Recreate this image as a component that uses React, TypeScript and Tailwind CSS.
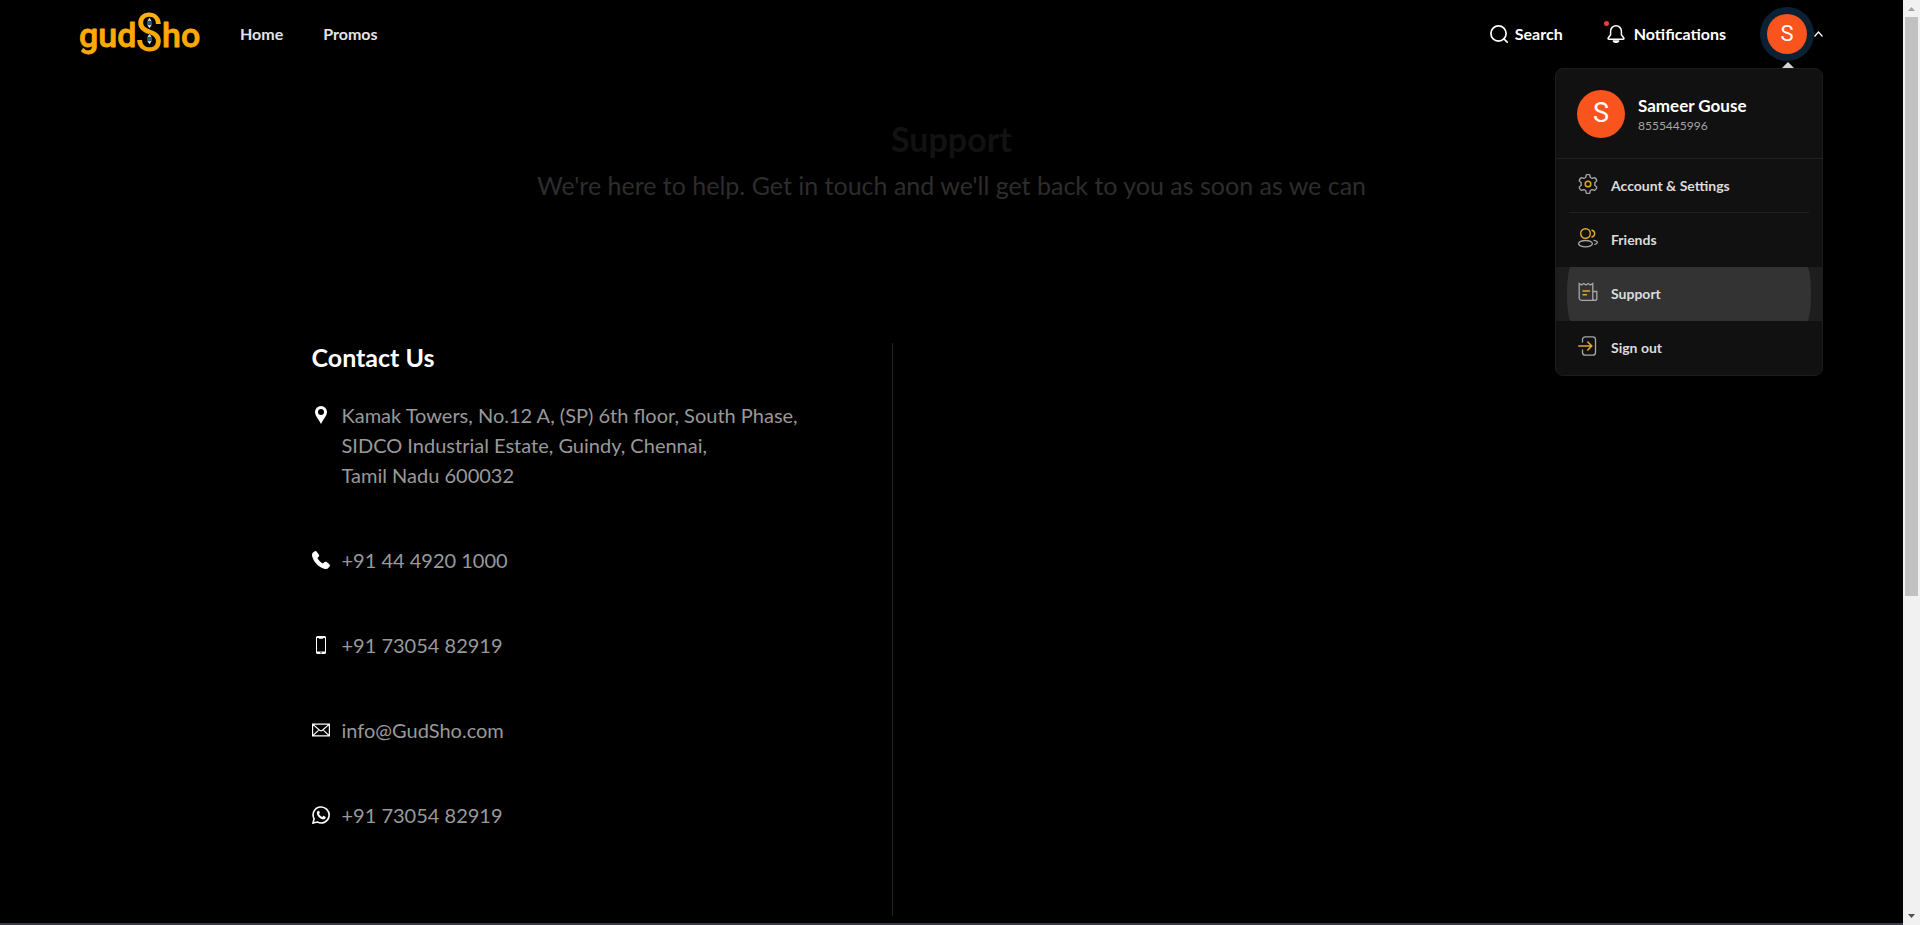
import type { ReactNode } from "react";

const contacts: { icon: ReactNode; lines: string[]; href?: string }[] = [
  {
    icon: (
      <svg viewBox="0 0 18 18" className="size-[18px]" fill="#fff" aria-hidden="true">
        <path fillRule="evenodd" d="M9 0a6 6 0 0 0-6 6c0 3.600 3.200 6.600 6 12 2.800-5.400 6-8.400 6-12a6 6 0 0 0-6-6Zm0 3a3 3 0 1 1 0 6 3 3 0 0 1 0-6Z" />
      </svg>
    ),
    lines: ["Kamak Towers, No.12 A, (SP) 6th floor, South Phase,", "SIDCO Industrial Estate, Guindy, Chennai,", "Tamil Nadu 600032"],
  },
  {
    icon: (
      <svg viewBox="0 0 18 18" className="size-[18px]" fill="#fff" aria-hidden="true">
        <path d="M2.500.500C3.300-.1 4.200 0 4.900.9l1.900 2.500c.6.800.5 1.600-.2 2.300L5.400 7c1 2.200 3 4.300 5.500 5.500l1.300-1.200c.7-.7 1.600-.8 2.400-.2l2.500 1.900c.9.700 1.100 1.500.5 2.400l-1.100 1.400c-1 1.200-2.500 1.500-4.300.9C6.700 16 1.900 11.200.3 5.700-.3 4 0 2.500 1 1.600Z" />
      </svg>
    ),
    lines: ["+91 44 4920 1000"],
    href: "tel:+914449201000",
  },
  {
    icon: (
      <svg viewBox="0 0 18 18" className="size-[18px]" aria-hidden="true">
        <path fill="#fff" fillRule="evenodd" d="M5.500 0h7A1.500 1.500 0 0 1 14 1.500v15a1.500 1.500 0 0 1-1.500 1.500h-7A1.500 1.500 0 0 1 4 16.500v-15A1.500 1.500 0 0 1 5.500 0ZM5 2v13.500h8V2h-1.500c-.2.600-.6.800-1 .8h-3c-.4 0-.8-.2-1-.8Zm4 14a.7.700 0 1 0 0 1.400A.7.700 0 0 0 9 16Z" />
      </svg>
    ),
    lines: ["+91 73054 82919"],
    href: "tel:+917305482919",
  },
  {
    icon: (
      <svg viewBox="0 0 18 18" className="size-[18px]" fill="none" stroke="#fff" strokeWidth="1.200" aria-hidden="true">
        <path d="M.6 3.100h16.800v11.800H.6ZM.9 3.400 7.600 9.200q1.400 1.100 2.800 0l6.700-5.800M.9 14.600l5.600-5.200M17.100 14.600l-5.600-5.200" />
      </svg>
    ),
    lines: ["info@GudSho.com"],
    href: "mailto:info@GudSho.com",
  },
  {
    icon: (
      <svg viewBox="0 0 18 18" className="size-[18px]" aria-hidden="true">
        <path fill="none" stroke="#fff" strokeWidth="1.600" d="m1 17 1.100-4.200A8 8 0 1 1 5.300 16Z" />
        <path fill="#fff" d="M6.500 4.700c.3 0 .5.100.6.400l.7 1.500c.1.300 0 .5-.2.700l-.6.700c.8 1.500 1.900 2.400 3.400 3l.7-.9c.2-.2.400-.3.700-.2l1.600.8c.3.200.4.400.3.700-.2 1.300-1.200 1.900-2.300 1.900-3.200-.2-6.400-3.400-6.600-6.400 0-1 .7-2.200 1.700-2.200Z" />
      </svg>
    ),
    lines: ["+91 73054 82919"],
    href: "https://wa.me/917305482919",
  },
];

function Logo() {
  return (
    <a href="#" aria-label="gudSho" className="block">
      <svg viewBox="0 0 120 60" className="h-[60px] w-[120px] overflow-visible" fontFamily="Roboto, sans-serif" fill="#fea904">
        <defs>
          <linearGradient id="gold" x1="0" y1="0" x2="0" y2="1">
            <stop offset="0" stopColor="#ffb80a" />
            <stop offset="1" stopColor="#fb9d04" />
          </linearGradient>
        </defs>
        <g stroke="#fea904" strokeWidth="0.800" strokeLinejoin="round">
          <text x="-1" y="43" fontSize="34" fontWeight="500">gud</text>
          <text x="82" y="43" fontSize="34" fontWeight="500">ho</text>
        </g>
        <text x="69" y="47" fontSize="54" fontWeight="400" textAnchor="middle" fontFamily="'Liberation Sans Narrow', 'Roboto Condensed', Roboto, sans-serif" fill="url(#gold)">S</text>
        <g stroke="#000" strokeWidth="0.500">
          <path d="M69.500 13.500q-5 5.500 0 11 5-5.500 0-11Z" fill="#f4f0df" />
          <circle cx="69.500" cy="19" r="2" fill="#1a6f96" />
          <path d="M69.500 29.500q-5 5.500 0 11 5-5.500 0-11Z" fill="#f4f0df" />
          <circle cx="69.500" cy="35" r="2" fill="#1a6f96" />
        </g>
      </svg>
    </a>
  );
}

const menuItems: { label: string; icon: ReactNode }[] = [
  {
    label: "Account & Settings",
    icon: (
      <>
        <path d="M8.200 1Q10-.2 11.800 1l.5 2.500q1 .3 1.700.9l2.600-.8q2 1.100 2.200 3.300l-2 1.900v2.400l2 1.900q-.2 2.200-2.200 3.300l-2.600-.8q-.7.600-1.700.9l-.5 2.500q-1.800 1.200-3.600 0l-.5-2.500q-1-.3-1.700-.9l-2.600.8q-2-1.100-2.200-3.300l2-1.900V8.800l-2-1.900q.2-2.200 2.200-3.300l2.600.8q.7-.6 1.700-.9Z" strokeLinejoin="round" />
        <circle cx="10" cy="10" r="2.800" stroke="#e0ab26" strokeWidth="1.500" />
      </>
    ),
  },
  {
    label: "Friends",
    icon: (
      <>
        <circle cx="7.500" cy="5.500" r="4.800" stroke="#e0ab26" strokeWidth="1.400" />
        <path d="M14 2.200a3.500 3.500 0 0 1 0 6.800" stroke="#e0ab26" strokeWidth="1.400" strokeLinecap="round" />
        <ellipse cx="7.500" cy="15.700" rx="6.900" ry="3.200" />
        <path d="M16 12.300q3.400.6 3.300 2.200-.1 1.300-2.500 1.800" strokeLinecap="round" />
      </>
    ),
  },
  {
    label: "Support",
    icon: (
      <>
        <path d="M1.200 1.500 3.500 3l2.300-1.500L8 3l2.200-1.500L12.500 3l2.300-1.500V18.400H3.800a2.600 2.600 0 0 1-2.600-2.600ZM14.800 9.500h4v6.900a2 2 0 0 1-4 0Z" />
        <path d="M5 9h6.500M5 12.800h3.500" stroke="#e0ab26" strokeWidth="1.500" strokeLinecap="round" />
      </>
    ),
  },
  {
    label: "Sign out",
    icon: (
      <>
        <path d="M4.500 6.500V3.600A2.800 2.800 0 0 1 7.300.8h7.400a2.800 2.800 0 0 1 2.800 2.800v12.800a2.800 2.800 0 0 1-2.800 2.800H7.300a2.800 2.800 0 0 1-2.800-2.800v-2.900" />
        <path d="M.8 10h12.700M9.800 6l4 4-4 4" stroke="#e0ab26" strokeWidth="1.600" strokeLinecap="round" strokeLinejoin="round" />
      </>
    ),
  },
];

function ProfileMenu() {
  return (
    <div className="absolute top-[68px] right-20 w-[268px] overflow-hidden rounded-lg border border-[#1c1c1c] bg-[#111]">
      <div className="flex h-[90px] items-center gap-[13px] border-b border-[#212121] px-[21px]">
        <span className="grid size-12 place-items-center rounded-full bg-[#f9531e] font-[Roboto,sans-serif] text-[27px] leading-none font-normal text-white">S</span>
        <div className="pt-1">
          <p className="text-[17px] leading-5 font-bold text-white">Sameer Gouse</p>
          <p className="text-xs leading-5 font-normal text-[#a5a5a5]">8555445996</p>
        </div>
      </div>
      <ul>
        {menuItems.map(({ label, icon }, i) => {
          const active = label === "Support";
          return (
            <li key={label} className={active ? "bg-[#1e1e1e] px-[11px]" : "px-[13px]"}>
              <a
                href="#"
                className={
                  active
                    ? "flex h-[54px] items-center gap-[13px] rounded-[4px/27px] bg-[#333] px-[11px]"
                    : i === 0
                      ? "flex h-[54px] items-center gap-[13px] border-b border-[#212121] px-[9px]"
                      : "flex h-[54px] items-center gap-[13px] px-[9px]"
                }
              >
                <svg viewBox="0 0 20 20" className="mb-1 size-5" fill="none" stroke="#a8a8a8" strokeWidth="1.300" aria-hidden="true">
                  {icon}
                </svg>
                <span className="text-sm leading-5 font-bold text-[#dcdcdc]">{label}</span>
              </a>
            </li>
          );
        })}
      </ul>
    </div>
  );
}

function Header() {
  return (
    <header className="relative z-10 flex h-[67px] items-center px-20 text-base font-bold text-white">
      <Logo />
      <nav className="ml-10 flex gap-10 text-[#e4e4e4]">
        <a href="#">Home</a>
        <a href="#">Promos</a>
      </nav>
      <div className="ml-auto flex items-center">
        <button type="button" className="flex items-center gap-[7px]">
          <svg viewBox="0 0 18 18" className="size-[18px]" fill="none" stroke="#fff" strokeWidth="1.700" strokeLinecap="round" aria-hidden="true">
            <circle cx="8.500" cy="8.500" r="7.600" />
            <path d="m14 14 3.200 3.200" />
          </svg>
          Search
        </button>
        <button type="button" className="relative ml-11 flex items-center gap-[9px]">
          <svg viewBox="0 0 18 18" className="size-[18px]" fill="none" stroke="#fff" strokeWidth="1.500" strokeLinejoin="round" aria-hidden="true">
            <path d="M9 .8A5.400 5.400 0 0 0 3.600 6.200v3.600L1.200 13q-.6 1.300.8 1.300h14q1.400 0 .8-1.300l-2.400-3.200V6.200A5.400 5.400 0 0 0 9 .8Z" />
            <path d="M6.300 16q2.700 2.800 5.400 0Z" fill="#fff" />
          </svg>
          <span className="absolute -top-px -left-[3px] size-[5px] rounded-full bg-[#f13a3a]" />
          Notifications
        </button>
        <button type="button" aria-label="Profile menu" aria-expanded="true" className="relative ml-[34px] flex items-center">
          <span className="grid size-[54px] place-items-center rounded-full bg-[#0a2033]">
            <span className="grid size-10 place-items-center rounded-full bg-[#f9531e] font-[Roboto,sans-serif] text-[22px] leading-none font-normal">S</span>
          </span>
          <svg viewBox="0 0 9 6" className="h-[6px] w-[9px]" fill="none" stroke="#fff" strokeWidth="1.200" aria-hidden="true">
            <path d="M.5 5.500 4.500 1l4 4.500" />
          </svg>
          <svg viewBox="0 0 14 7" className="absolute top-[55px] left-[21px] h-[7px] w-[14px]" fill="#d4d4d4" aria-hidden="true">
            <path d="M0 7 7 0l7 7Z" />
          </svg>
        </button>
      </div>
      <ProfileMenu />
    </header>
  );
}

function Scrollbar() {
  return (
    <div aria-hidden="true" className="flex w-[17px] shrink-0 flex-col items-center bg-[#f1f1f1]">
      <svg viewBox="0 0 17 17" className="size-[17px]" fill="#a3a3a3">
        <path d="M5 11 8.500 7l3.500 4Z" />
      </svg>
      <div className="w-full flex-1 px-[2px]">
        <div className="h-[65%] bg-[#c1c1c1]" />
      </div>
      <svg viewBox="0 0 17 17" className="size-[17px]" fill="#505050">
        <path d="M5 6l3.500 4L12 6Z" />
      </svg>
    </div>
  );
}

export default function App() {
  return (
    <div className="flex min-h-screen bg-black font-[Lato,sans-serif]">
      <div className="flex min-w-0 flex-1 flex-col border-b-2 border-[#3a3b45]">
        <Header />
        <main className="flex flex-1 flex-col pt-[52px] pb-[7px]">
          <div className="text-center">
            <h1 className="text-[34px] leading-10 font-bold text-[#121212]">Support</h1>
            <p className="mt-2 text-[25px] leading-9 text-[#2d2d2d]">
              We're here to help. Get in touch and we'll get back to you as soon as we can
            </p>
          </div>
          <section className="mx-auto mt-[140px] grid w-full max-w-[1280px] flex-1 grid-cols-2">
            <div className="w-[581px] border-r border-[#222]">
              <h2 className="text-[25px] leading-7 font-bold text-white">Contact Us</h2>
              <address className="mt-[29px] flex flex-col gap-[55px] text-xl leading-[30px] text-[#999] not-italic">
                {contacts.map(({ icon, lines, href }, i) => (
                  <div key={i} className="flex gap-3">
                    <span className="flex h-[30px] items-center">{icon}</span>
                    {href ? (
                      <a href={href}>{lines[0]}</a>
                    ) : (
                      <p>
                        {lines.map((line) => (
                          <span key={line} className="block">{line}</span>
                        ))}
                      </p>
                    )}
                  </div>
                ))}
              </address>
            </div>
          </section>
        </main>
      </div>
      <Scrollbar />
    </div>
  );
}
